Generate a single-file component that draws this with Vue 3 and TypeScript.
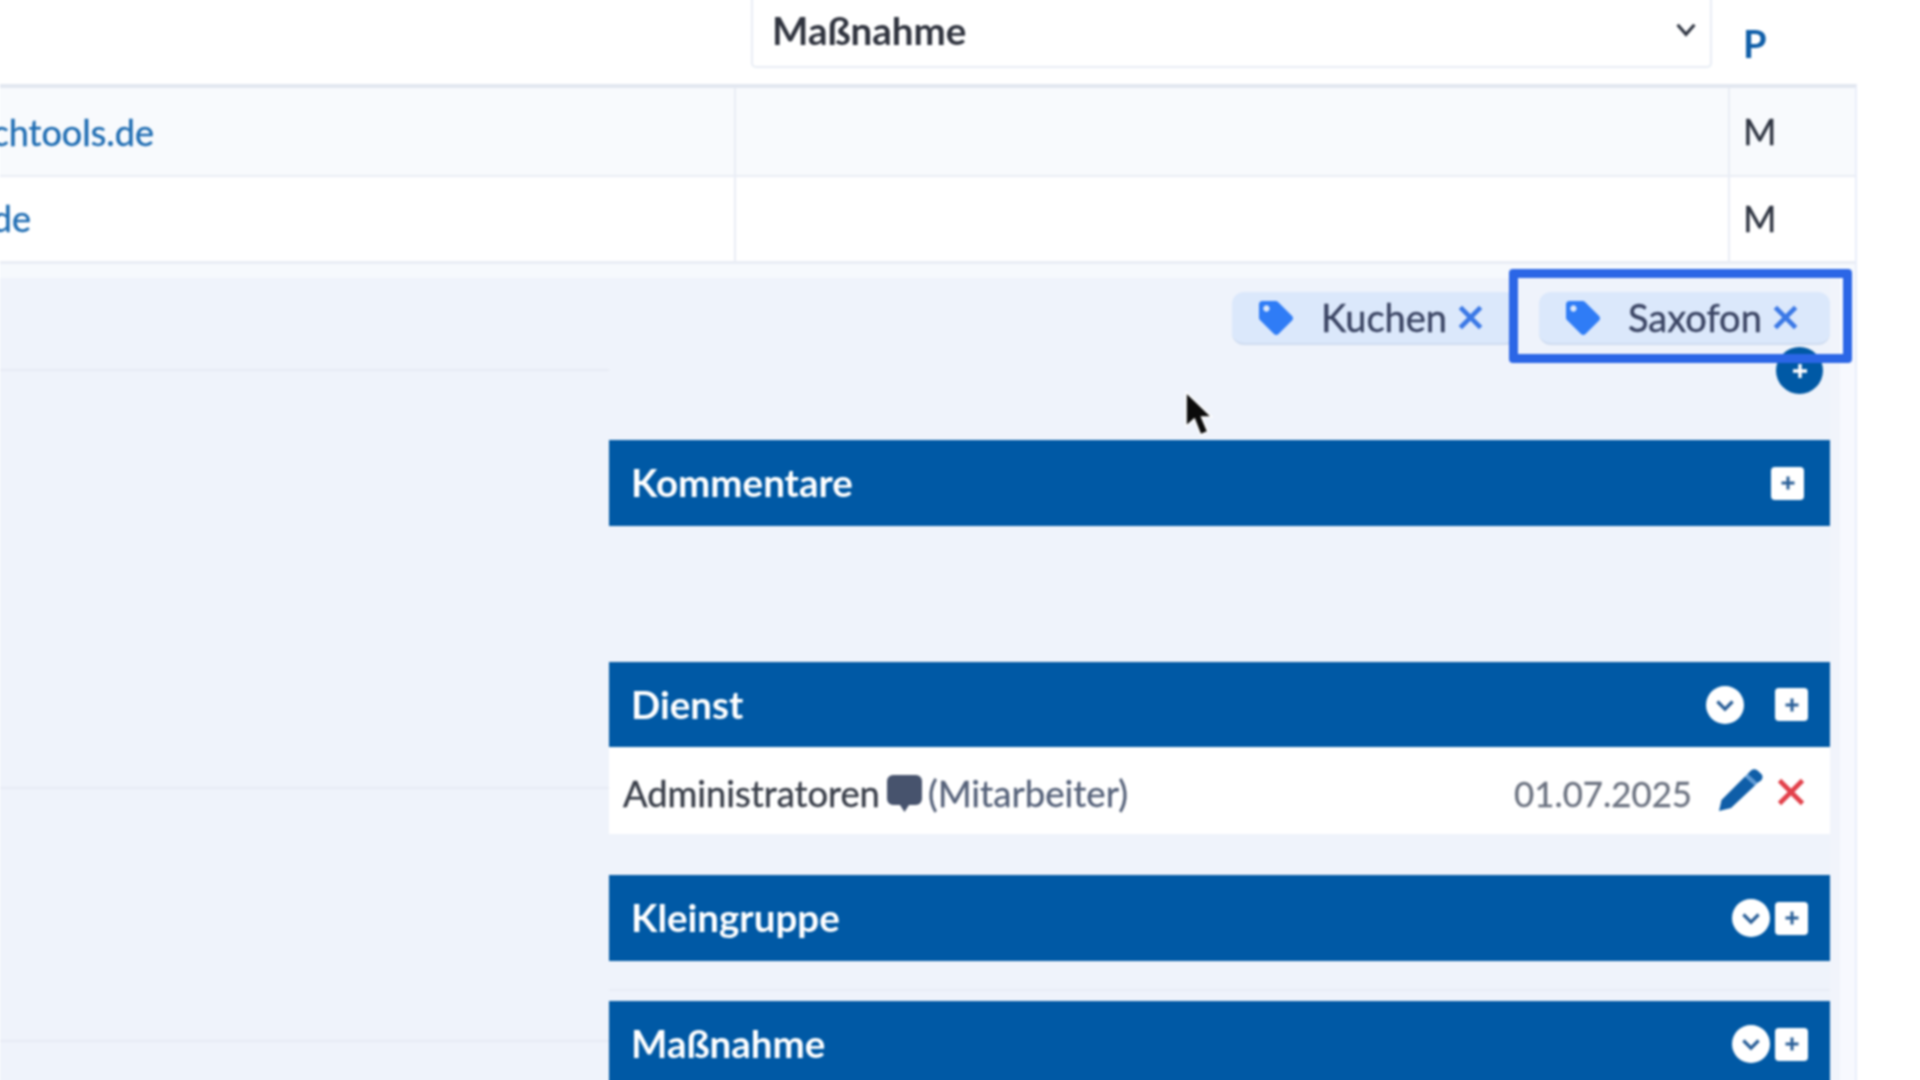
<script setup lang="ts">
const tagPath = 'M0 252.118V48C0 21.49 21.49 0 48 0h204.118a48 48 0 0 1 33.941 14.059l211.882 211.882c18.745 18.745 18.745 49.137 0 67.882L293.823 497.941c-18.745 18.745-49.137 18.745-67.882 0L14.059 286.059A48 48 0 0 1 0 252.118zM112 64c-26.51 0-48 21.49-48 48s21.49 48 48 48 48-21.49 48-48-21.49-48-48-48z'
const chips: { label: string; gapClass: string }[] = [
  { label: 'Kuchen', gapClass: 'chip-kuchen' },
  { label: 'Saxofon', gapClass: 'chip-saxofon' },
]
const rows: { link: string; shaded: boolean }[] = [
  { link: 'chtools.de', shaded: true },
  { link: 'de', shaded: false },
]
</script>

<template>
  <div class="page">
    <div class="frame">
      <div class="sheet">
        <div class="filter-row">
          <div class="select">
            <span>Maßnahme</span>
            <svg class="select-caret" viewBox="0 0 20 14"><path d="M3 3l7 8 7-8" fill="none" stroke="#2f3542" stroke-width="2.6" /></svg>
          </div>
          <div class="col-head">P</div>
        </div>

        <div class="table">
          <div v-for="row in rows" :key="row.link" class="t-row" :class="{ shaded: row.shaded }">
            <div class="t-link"><a>{{ row.link }}</a></div>
            <div class="t-empty"></div>
            <div class="t-m">M</div>
          </div>
        </div>

        <div class="detail">
          <div class="left-col">
            <div class="rule r1"></div>
            <div class="rule r2"></div>
            <div class="rule r3"></div>
          </div>

          <div class="right-col">
            <div class="chips">
              <div v-for="chip in chips" :key="chip.label" class="chip" :class="chip.gapClass">
                <svg class="tag" viewBox="0 0 512 512"><path :d="tagPath" fill="#2f7cf6" /></svg>
                <span class="chip-label">{{ chip.label }}</span>
                <svg class="chip-x" viewBox="0 0 24 24"><path d="M3 3l18 18M21 3L3 21" stroke="#3a78e6" stroke-width="4.2" fill="none" /></svg>
              </div>
            </div>
            <div class="add-row">
              <div class="round-add">
                <svg viewBox="0 0 20 20"><path d="M10 3v14M3 10h14" stroke="#fff" stroke-width="3.4" /></svg>
              </div>
            </div>

            <div class="bar kommentare">
              <span>Kommentare</span>
              <div class="sq-add"><svg viewBox="0 0 20 20"><path d="M10 3.500v13M3.500 10h13" stroke="#2a5f98" stroke-width="3" /></svg></div>
            </div>

            <div class="bar dienst">
              <span>Dienst</span>
              <div class="bar-tools wide">
                <div class="down"><svg viewBox="0 0 24 24"><path d="M5.500 9l6.500 6.500L18.500 9" fill="none" stroke="#2a5f98" stroke-width="2.800" /></svg></div>
                <div class="sq-add"><svg viewBox="0 0 20 20"><path d="M10 3.500v13M3.500 10h13" stroke="#2a5f98" stroke-width="3" /></svg></div>
              </div>
            </div>
            <div class="entry">
              <span class="entry-name">Administratoren</span>
              <svg class="bubble" viewBox="0 0 35 37"><path d="M6 0h23a6 6 0 0 1 6 6v18a6 6 0 0 1-6 6h-7l-4.500 7-4.500-7H6a6 6 0 0 1-6-6V6a6 6 0 0 1 6-6z" fill="#47536d" /></svg>
              <span class="entry-role">(Mitarbeiter)</span>
              <span class="entry-date">01.07.2025</span>
              <svg class="pencil" viewBox="0 0 45 43">
                <path d="M1 42l2.500-11L27 7.500 37 16.500 13 39z" fill="#0f5ea8" />
                <path d="M27 7.500l2.500-2.500 10 9-2.500 2.500z" fill="#5d9ad6" />
                <path d="M29.500 5l3.500-3.500c2-1.800 4.500-1.800 6.500 0l3.500 3.200c2 2 2 4.500.2 6.500L39.500 14z" fill="#0f5ea8" />
              </svg>
              <svg class="del" viewBox="0 0 28 28"><path d="M2.500 2.500l23 23M25.500 2.500l-23 23" stroke="#e2404a" stroke-width="4.600" fill="none" /></svg>
            </div>

            <div class="bar kleingruppe">
              <span>Kleingruppe</span>
              <div class="bar-tools">
                <div class="down"><svg viewBox="0 0 24 24"><path d="M5.500 9l6.500 6.500L18.500 9" fill="none" stroke="#2a5f98" stroke-width="2.800" /></svg></div>
                <div class="sq-add"><svg viewBox="0 0 20 20"><path d="M10 3.500v13M3.500 10h13" stroke="#2a5f98" stroke-width="3" /></svg></div>
              </div>
            </div>
            <div class="faint"></div>
            <div class="bar massnahme">
              <span>Maßnahme</span>
              <div class="bar-tools">
                <div class="down"><svg viewBox="0 0 24 24"><path d="M5.500 9l6.500 6.500L18.500 9" fill="none" stroke="#2a5f98" stroke-width="2.800" /></svg></div>
                <div class="sq-add"><svg viewBox="0 0 20 20"><path d="M10 3.500v13M3.500 10h13" stroke="#2a5f98" stroke-width="3" /></svg></div>
              </div>
            </div>
          </div>

          <div class="edge-strip"></div>
        </div>
      </div>

      <div class="highlight"></div>
      <svg class="cursor" viewBox="0 0 27 46">
        <path d="M1 1v33l8-7 6 15 7-3-6-14h10z" fill="#0b0b0b" stroke="#fff" stroke-width="1.500" />
      </svg>
    </div>
  </div>
</template>

<style scoped>
.page {
  position: relative;
  width: 1920px;
  height: 1080px;
  overflow: hidden;
  background: #fff;
  font-family: Lato, "Open Sans", sans-serif;
  color: #2f3542;
}
.frame {
  position: relative;
  width: 1920px;
  height: 1100px;
  background: #fff;
  filter: blur(0.8px);
}
.sheet {
  width: 1857px;
  height: 1100px;
  display: flex;
  flex-direction: column;
}
.filter-row {
  height: 84px;
  flex: none;
  display: flex;
  align-items: flex-end;
  padding-left: 751px;
  box-sizing: border-box;
}
.select {
  width: 961px;
  height: 88px;
  margin-bottom: 16px;
  box-sizing: border-box;
  border: 2px solid #e8edf5;
  border-top: none;
  border-radius: 0 0 5px 5px;
  padding: 0 12px 0 19px;
  display: flex;
  align-items: center;
  justify-content: space-between;
  font-size: 38.5px;
  font-weight: 700;
  color: #30343f;
  margin-top: -20px;
}
.select span {
  position: relative;
  top: 7px;
}
.select-caret {
  width: 24px;
  height: 17px;
  position: relative;
  top: 6px;
}
.col-head {
  align-self: flex-end;
  margin-left: 31px;
  margin-bottom: 19px;
  font-size: 38px;
  line-height: 44px;
  font-weight: 700;
  color: #0f5ea8;
}
.table {
  flex: none;
  border-top: 4px solid #e2e7f0;
  border-right: 2px solid #e9eefa;
}
.t-row {
  display: grid;
  grid-template-columns: 734px 996px 125px;
  height: 89px;
  border-bottom: 2px solid #e9edf5;
  background: #fff;
  box-sizing: border-box;
}
.t-row.shaded {
  background: #f8fafd;
}
.t-row:last-child {
  height: 87px;
  border-bottom-width: 3px;
}
.t-link {
  display: flex;
  align-items: center;
  justify-content: flex-end;
  width: 154px;
  font-size: 36px;
  color: #1f6db3;
  -webkit-text-stroke: 0.4px #1f6db3;
  grid-column: 1;
  justify-self: start;
  white-space: nowrap;
}
.t-row:not(.shaded) .t-link {
  width: 31px;
  padding-bottom: 2px;
}
.t-empty {
  grid-column: 2;
  border-left: 2px solid #e9edf5;
  border-right: 2px solid #e9edf5;
}
.t-m {
  grid-column: 3;
  display: flex;
  align-items: center;
  padding: 0 0 2px 13px;
  font-size: 36px;
  color: #2f3542;
  -webkit-text-stroke: 0.4px #2f3542;
}
.detail {
  flex: 1;
  min-height: 0;
  display: flex;
  border-right: 2px solid #e9eefa;
  background: linear-gradient(#f6f9fd 0, #f6f9fd 14px, #eff3fb 14px);
  position: relative;
}
.left-col {
  width: 609px;
  flex: none;
  padding-top: 105px;
  box-sizing: border-box;
}
.rule {
  height: 2px;
  background: #e7ebf4;
}
.r2 {
  margin-top: 416px;
}
.r3 {
  margin-top: 251px;
}
.right-col {
  width: 1221px;
  flex: none;
  padding-top: 28px;
  box-sizing: border-box;
}
.edge-strip {
  flex: 1;
  margin-top: 14px;
  background: linear-gradient(90deg, #f1f4fb 0, #f1f4fb 10px, #f7f9fe 10px);
}
.chips {
  display: flex;
  justify-content: flex-end;
  gap: 22px;
}
.chip {
  height: 53px;
  box-sizing: border-box;
  border-radius: 12px;
  background: #dbe8fb;
  border-bottom: 2px solid #cfdcf0;
  display: flex;
  align-items: center;
  padding: 0 28px 0 27px;
}
.chip-kuchen {
  width: 285px;
}
.chip-saxofon {
  width: 291px;
}
.tag {
  width: 34px;
  height: 34px;
  flex: none;
}
.chip-label {
  margin-left: 28px;
  font-size: 38px;
  line-height: 53px;
  color: #3b4564;
  -webkit-text-stroke: 0.4px #3b4564;
}
.chip-x {
  width: 27px;
  height: 27px;
  margin-left: 10px;
  flex: none;
}
.add-row {
  display: flex;
  justify-content: flex-end;
  padding: 2px 7px 0 0;
}
.round-add {
  width: 47px;
  height: 47px;
  border-radius: 50%;
  background: #0059a5;
  display: flex;
  align-items: center;
  justify-content: center;
}
.round-add svg {
  width: 20px;
  height: 20px;
}
.bar {
  height: 86px;
  background: #0059a5;
  color: #fff;
  font-size: 38.5px;
  font-weight: 700;
  display: flex;
  align-items: center;
  justify-content: space-between;
  padding: 0 22px 0 22px;
  box-sizing: border-box;
}
.bar > span {
  position: relative;
  top: -1px;
}
.kommentare {
  margin-top: 46px;
  padding-right: 26px;
}
.dienst {
  margin-top: 136px;
  height: 85px;
}
.kleingruppe {
  margin-top: 41px;
}
.faint {
  height: 2px;
  margin-top: 28px;
  background: #e9edf6;
}
.massnahme {
  margin-top: 10px;
  height: 86px;
}
.bar-tools {
  display: flex;
  align-items: center;
  gap: 5px;
}
.bar-tools.wide {
  gap: 31px;
}
.down {
  width: 38px;
  height: 38px;
  border-radius: 50%;
  background: #fff;
  display: flex;
  align-items: center;
  justify-content: center;
}
.down svg {
  width: 28px;
  height: 28px;
}
.sq-add {
  width: 33px;
  height: 33px;
  border-radius: 4px;
  background: #fff;
  display: flex;
  align-items: center;
  justify-content: center;
}
.sq-add svg {
  width: 20px;
  height: 20px;
}
.entry {
  height: 87px;
  background: #fff;
  display: flex;
  align-items: center;
  padding: 5px 25px 0 14px;
  font-size: 36.3px;
  box-sizing: border-box;
}
.entry-name {
  color: #3a3f4a;
  -webkit-text-stroke: 0.4px #3a3f4a;
}
.bubble {
  width: 35px;
  height: 37px;
  margin-left: 7px;
  flex: none;
}
.entry-role {
  margin-left: 6px;
  font-size: 36.6px;
  color: #56627a;
  -webkit-text-stroke: 0.3px #56627a;
}
.entry-date {
  margin-left: auto;
  font-size: 34.8px;
  color: #6b7280;
  -webkit-text-stroke: 0.3px #6b7280;
}
.pencil {
  width: 45px;
  height: 43px;
  margin-left: 26px;
  flex: none;
  position: relative;
  top: -3px;
}
.del {
  width: 28px;
  height: 28px;
  margin-left: 14px;
  flex: none;
  position: relative;
  top: -1px;
}
.highlight {
  position: absolute;
  left: 1509px;
  top: 269px;
  width: 343px;
  height: 94px;
  box-sizing: border-box;
  border: 9px solid #2b66e6;
  border-radius: 4px;
}
.cursor {
  position: absolute;
  left: 1185px;
  top: 391px;
  width: 28px;
  height: 48px;
}
</style>
